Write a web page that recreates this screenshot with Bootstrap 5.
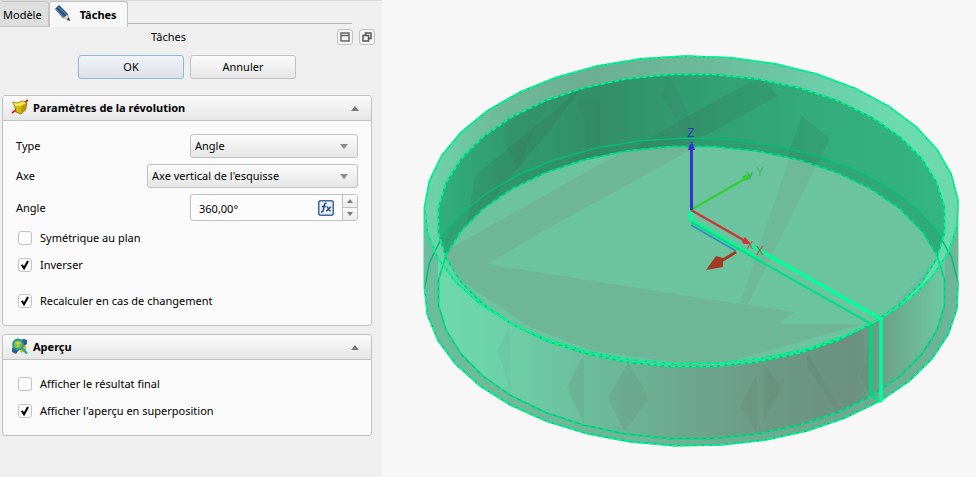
<!DOCTYPE html>
<html lang="fr">
<head>
<meta charset="utf-8">
<meta name="viewport" content="width=device-width, initial-scale=1">
<title>Tâches</title>
<link href="https://cdn.jsdelivr.net/npm/bootstrap@5.3.0/dist/css/bootstrap.min.css" rel="stylesheet">
<style>
body{font-family:"Noto Sans","Open Sans",sans-serif;font-size:11px;line-height:16px;color:#000;background:#f7f7f7}
.side{flex:0 0 382px;background:#efefef;border-top:1px solid #d9d9d9}
.tab-row{height:27px}
.tab-row .nav-link{color:#000;border:1px solid #c3c3c3;border-radius:3px 3px 0 0;line-height:16px}
.tab-model{background:#dedede;padding:5px 6px 3px 3px;border-left:0!important;height:26px}
.tab-tasks{background:#f7f7f7;padding:5px 10px 3px 4px;border-bottom:0!important;font-weight:700;height:26px}
.tab-tasks svg{margin-top:-2px}
.tab-line{border-bottom:1px solid #b5b5b5;height:23px;margin-right:30px}
.title-row{height:18px;padding-right:7px}
.mini{width:16px;height:16px;border:1px solid #c1c1c1;border-radius:3px;background:#f5f5f5}
.face{background:linear-gradient(#fbfbfb,#e6e6e6);border:1px solid #c1c1c1;border-radius:3px;color:#000}
.act{width:106px;height:24px}
.act.main{background:linear-gradient(#f0f3f8,#dde1e8);border-color:#8fb4de}
.panel{background:#fafafa;border:1px solid #c1c1c1;border-radius:3px}
.panel-head{background:linear-gradient(#fafafa,#e6e6e6);border:0;border-bottom:1px solid #c1c1c1;height:25px;font-weight:700;border-radius:2px 2px 0 0;width:100%;color:#000}
.pick{height:24px;padding:0 4px;appearance:none;background:url("data:image/svg+xml,%3Csvg xmlns='http://www.w3.org/2000/svg' width='8' height='5'%3E%3Cpath d='M0 0h8L4 5z' fill='%23888'/%3E%3C/svg%3E") right 9px center no-repeat,linear-gradient(#fbfbfb,#e6e6e6)}
.w-short{width:168px}
.w-long{width:211px}
.spin{height:27px;border:1px solid #c1c1c1;border-radius:3px;background:#fcfcfc}
.spin input{border:0;background:none;width:0;min-width:0;padding:2px 0 0 8px;outline:0}
.steps{flex:0 0 15px;border-left:1px solid #c1c1c1}
.steps button{background:linear-gradient(#fbfbfb,#ececec);border:0}
.steps button+button{border-top:1px solid #c1c1c1}
.tick{appearance:none;width:14px;height:14px;margin:0;border:1px solid #c3c3c3;border-radius:3px;background:#fcfcfc}
.tick:checked{background:url("data:image/svg+xml,%3Csvg xmlns='http://www.w3.org/2000/svg' width='12' height='12'%3E%3Cpath d='M2.8 5.8L5 9.3L9 2' fill='none' stroke='%23000' stroke-width='2.1'/%3E%3C/svg%3E") center no-repeat #fcfcfc}
.gap-tick{gap:8px}
.rows{padding:13px 13px 16px}
.rows-b{padding:16px 13px}
.checks{gap:11px}
.rows .checks,.rows-b{padding-left:2px}
.rows-b{padding-left:15px}
.grow-a{margin-top:9px}
.space-b{margin-top:9px}
.space-row{gap:6px}
.stack-side{gap:8px;padding:16px 10px 0 2px}
.view svg{display:block;width:100%;height:100vh}
svg text{font-family:"Liberation Sans",sans-serif}
</style>
<script src="https://cdn.jsdelivr.net/npm/bootstrap@5.3.0/dist/js/bootstrap.bundle.min.js"></script>
</head>
<body>
<div class="d-flex min-vh-100">
<aside class="side">
  <nav class="tab-row d-flex align-items-start">
    <a href="#" class="nav-link tab-model">Modèle</a>
    <a href="#" class="nav-link tab-tasks d-flex">
      <svg width="18" height="18" viewBox="0 0 18 18"><path d="M1 4L5 0L14 9L15 15L9 13Z" fill="#2a4a72"/><path d="M2 4L10 12M4 2L13 10" stroke="#4f7fb5" stroke-width="1.2"/><path d="M9 13L13.500 9.500L15.500 15.500Z" fill="#ddd2bd"/><path d="M13 14.500L15 12.500L16 16Z" fill="#111"/></svg>
      <span class="ps-2">Tâches</span></a>
    <div class="tab-line flex-fill"></div>
  </nav>
  <div class="title-row d-flex align-items-center">
    <div class="flex-fill text-center">Tâches</div>
    <div class="d-flex space-row">
      <button class="mini p-0 d-flex align-items-center justify-content-center" aria-label="Réduire"><svg width="10" height="10"><path d="M1 1H9V9H1ZM1 3.500H9" fill="none" stroke="#666" stroke-width="1.5"/></svg></button>
      <button class="mini p-0 d-flex align-items-center justify-content-center" aria-label="Détacher"><svg width="10" height="10"><path d="M3.500 3V1H9V6.500H7M1 3.500H6.500V9H1Z" fill="none" stroke="#555" stroke-width="1.5"/></svg></button>
    </div>
  </div>
  <div class="d-flex justify-content-center space-row space-b pe-2">
    <button class="face act main p-0">OK</button>
    <button class="face act p-0">Annuler</button>
  </div>
  <div class="stack-side d-flex flex-column">
    <section class="panel">
      <button class="panel-head d-flex align-items-center px-2">
        <svg width="18" height="18" viewBox="0 0 18 18"><path d="M1 14L5 11M13 4L17 1" stroke="#d32020" stroke-width="1.8"/><path d="M1.500 3L6 4L12 2L16 4L14.500 11L10 15L5 13L4 8Z" fill="#d8b60b" stroke="#715d08" stroke-width=".7"/><path d="M2 3.500L6 4.500L12 2.500L15 4L9.500 7L4.500 7Z" fill="#ffe94c"/><path d="M10 7.500L15.300 4.500L14 10.500L10 14Z" fill="#b99708"/></svg>
        <span class="flex-fill text-start ps-1">Paramètres de la révolution</span>
        <svg class="me-1" width="8" height="5"><path d="M0 5L4 0L8 5Z" fill="#777"/></svg>
      </button>
      <div class="rows">
        <div class="d-flex flex-column space-row">
          <div class="d-flex justify-content-between align-items-center"><label for="type">Type</label><select id="type" class="face pick w-short"><option>Angle</option></select></div>
          <div class="d-flex justify-content-between align-items-center"><label for="axis">Axe</label><select id="axis" class="face pick w-long"><option>Axe vertical de l'esquisse</option></select></div>
          <div class="d-flex justify-content-between align-items-center"><label for="angle">Angle</label>
            <div class="spin w-short d-flex"><input id="angle" class="flex-fill" value="360,00°">
              <button class="border-0 bg-transparent p-0 me-2" aria-label="Expression"><svg class="d-block" width="16" height="16"><rect x=".75" y=".75" width="14.500" height="14.500" rx="2" fill="#e6edf7" stroke="#40659f" stroke-width="1.5"/><path d="M8.500 3.500C6.500 2.500 6.200 5 5.800 7.500S5 12.500 3 12M3.800 6.500H7.800M8.500 7C10.500 6 10 11.500 12.800 10.800M12.800 6.800L8.300 11.200" fill="none" stroke="#24406f" stroke-width="1.3"/></svg></button>
              <div class="steps d-flex flex-column">
                <button class="flex-fill p-0 d-flex align-items-center justify-content-center" aria-label="Plus"><svg width="6" height="4"><path d="M0 4L3 0L6 4Z" fill="#777"/></svg></button>
                <button class="flex-fill p-0 d-flex align-items-center justify-content-center" aria-label="Moins"><svg width="6" height="4"><path d="M0 0H6L3 4Z" fill="#777"/></svg></button>
              </div>
            </div></div>
        </div>
        <div class="d-flex flex-column checks grow-a">
          <label class="d-flex align-items-center gap-tick"><input type="checkbox" class="tick">Symétrique au plan</label>
          <label class="d-flex align-items-center gap-tick"><input type="checkbox" class="tick" checked>Inverser</label>
          <label class="d-flex align-items-center gap-tick grow-a"><input type="checkbox" class="tick" checked>Recalculer en cas de changement</label>
        </div>
      </div>
    </section>
    <section class="panel">
      <button class="panel-head d-flex align-items-center px-2">
        <svg width="18" height="18" viewBox="0 0 18 18"><path d="M9 2L13 1L16 2V6L13 8ZM1 10L5 9L8 12L5 16L1 14Z" fill="#345b8c"/><path d="M8 10L15 7V13L10 15Z" fill="#e0b51d"/><circle cx="7" cy="6.500" r="5" fill="#86b83c" stroke="#159b9f" stroke-width="1.8"/><path d="M11 10L16 15.500" stroke="#16aaa8" stroke-width="2.300"/><path d="M4.500 5H9.500M7 3.500V9" stroke="#d8e56b"/></svg>
        <span class="flex-fill text-start ps-1">Aperçu</span>
        <svg class="me-1" width="8" height="5"><path d="M0 5L4 0L8 5Z" fill="#777"/></svg>
      </button>
      <div class="rows-b d-flex flex-column checks">
        <label class="d-flex align-items-center gap-tick"><input type="checkbox" class="tick">Afficher le résultat final</label>
        <label class="d-flex align-items-center gap-tick"><input type="checkbox" class="tick" checked>Afficher l'aperçu en superposition</label>
      </div>
    </section>
  </div>
</aside>
<main class="view flex-fill">
<svg viewBox="382 0 594 477" role="img" aria-label="Vue 3D de la révolution">
  <defs>
    <linearGradient id="gRim" gradientUnits="userSpaceOnUse" x1="424" x2="958" y1="0" y2="0"><stop offset="0" stop-color="#6dd5ac"/><stop offset=".15" stop-color="#6db99a"/><stop offset=".3" stop-color="#6dae94"/><stop offset=".52" stop-color="#6cb99b"/><stop offset=".75" stop-color="#6cceaa"/><stop offset=".9" stop-color="#6cdcb0"/><stop offset="1" stop-color="#6cd8ac"/></linearGradient>
    <linearGradient id="gIn" gradientUnits="userSpaceOnUse" x1="438" x2="945" y1="0" y2="0"><stop offset="0" stop-color="#31ae7d"/><stop offset=".15" stop-color="#31996f"/><stop offset=".32" stop-color="#328e69"/><stop offset=".52" stop-color="#329e74"/><stop offset=".75" stop-color="#33ac7c"/><stop offset="1" stop-color="#33b582"/></linearGradient>
    <linearGradient id="gOut" gradientUnits="userSpaceOnUse" x1="438" x2="945" y1="0" y2="0"><stop offset="0" stop-color="#6dd8ae"/><stop offset=".1" stop-color="#6dd3ab"/><stop offset=".25" stop-color="#6cc2a0"/><stop offset=".45" stop-color="#6cab92"/><stop offset=".65" stop-color="#6c9985"/><stop offset=".82" stop-color="#6c9080"/><stop offset=".86" stop-color="#6c9b86"/><stop offset="1" stop-color="#6cc9a4"/></linearGradient>
    <linearGradient id="gBase" gradientUnits="userSpaceOnUse" x1="424" x2="958" y1="0" y2="0"><stop offset="0" stop-color="#6cbd9d"/><stop offset=".4" stop-color="#6cb699"/><stop offset=".75" stop-color="#6ca88f"/><stop offset="1" stop-color="#6cb699"/></linearGradient>
    <clipPath id="clipTop"><polygon data-ring="in 220.5"/></clipPath>
    <clipPath id="clipFloor"><polygon data-ring="in 292.5"/></clipPath>
  </defs>
  <polygon data-ring="out 292" fill="url(#gBase)"/><path d="M424 207H958V289H424Z" fill="url(#gBase)"/>
  <polygon data-ring="in 292.5" fill="url(#gOut)"/><path d="M438 220H945V300H438Z" fill="url(#gOut)"/>
  <g fill="#5b6b5f" fill-opacity=".13"><path fill-opacity=".06" d="M510 325L498 350L511 395Z"/><path d="M584 355L567 387L584 424ZM628 363L608 398L625 432L649 397ZM757 374L740 406L757 433ZM764 364V420L781 387ZM807 352V367L837 412V404ZM870 345L860 377L870 396Z"/></g>
  <polygon data-ring="out 210" fill="url(#gRim)"/>
  <polygon data-ring="in 220.5" fill="url(#gIn)"/>
  <g clip-path="url(#clipTop)">
    <g fill="#3c493c" fill-opacity=".12"><path d="M580 89L475 176L465 235L518 168L550 130ZM760 77L778 96L710 133L600 190L640 144L690 115ZM802 116L830 139L815 166L785 163Z"/><path fill-opacity=".06" d="M505 125L503 140L518 168L550 95ZM668 74L661 95L690 140V118ZM576 100L585 120V160H600V100Z"/></g>
    <polygon data-ring="out 292" fill="#2e8864" fill-opacity=".22"/>
    <polygon data-ring="in 292.5" fill="#6cc3a0"/>
    <g clip-path="url(#clipFloor)" fill="#6eb697"><path d="M625 150L690 146L694 148L545 230L487 264L694 297L794 312L778 324H862L725 363L690 365L590 350L530 327L430 260Z"/><path d="M790 157L817 163L748 304L740 303Z" opacity=".75"/><path d="M938 259L882 318L938 285Z" opacity=".75"/></g>
  </g>
  <g fill="none" stroke-linejoin="round" stroke-width="1.5">
    <polygon data-ring="out 292" stroke="#04bd77"/>
    <polygon data-ring="in 292.5" stroke="#04c57c"/>
    <polygon data-ring="out 210" stroke="#00d584"/>
    <polygon data-ring="in 220.5" stroke="#00c97c"/>
    <g stroke="#00fb95" stroke-dasharray="4 3"><polygon data-ring="in 220.5"/><polygon data-ring="out 210" stroke-dasharray="7 2"/></g>
    <polygon data-ring="in 292.5" stroke="#00e58a" stroke-dasharray="4 4"/>
    <path data-arc="out 292" stroke="#00fb95" stroke-dasharray="6 2"/>
    <path d="M424 207V289M958 207V289" stroke="#5acb9c" stroke-width="1"/>
  </g>
  <path d="M691 225L736 251" stroke="#288fc0" stroke-width="1.500"/>
  <path d="M691 222L871 324V396L881 402" fill="none" stroke="#00df86" stroke-width="2.200"/>
  <path d="M871 324V396" stroke="#00d680" stroke-width="3.500"/>
  <path d="M691 210V221" stroke="#00ff9b" stroke-width="4"/>
  <path d="M691 219L760 259" stroke="#00fb95" stroke-width="2"/>
  <path d="M752 246L881 319V402" fill="none" stroke="#00ff9b" stroke-width="3.500"/>
  <path d="M691 210L748 177" stroke="#34cd34" stroke-width="2.200"/><path d="M742 177L746 174L751 176L748 180L743 181Z" fill="#34cd34"/>
  <path d="M691 210L747 242" stroke="#cd3434" stroke-width="2.200"/><path d="M742 242L745 237L751 244L744 244Z" fill="#cd3434"/>
  <path d="M691.500 210V148" stroke="#3434cd" stroke-width="3"/><path d="M688 150L690 144H693L695 150Z" fill="#3434cd"/>
  <path d="M736 252L718 263" stroke="#a53a22" stroke-width="3"/><path d="M706 270L716 256L723 258V267Z" fill="#a53a22"/>
  <g font-size="12" text-anchor="middle"><text x="691" y="137" fill="#3434cd">Z</text><text x="691" y="147" font-size="8" fill="#3434cd">Z</text><text x="760" y="176" fill="#3fb95c">Y</text><text x="750" y="180" font-size="10" fill="#2fae4c">Y</text><text x="760" y="255" fill="#b5523f">X</text><text x="750" y="249" font-size="11" fill="#b5523f">X</text></g>
</svg>
</main>
</div>
<script>
// Circles in isometric view, split into chords from the seam at 45 degrees.
const rings = { out: [267, 154, 37], in: [254, 146.5, 36] };
function ringPoints(spec) {
  const [kind, cy] = spec.split(' ');
  const [rx, ry, n] = rings[kind];
  return Array.from({ length: n }, (_, i) => {
    const a = Math.PI / 4 + i * 2 * Math.PI / n;
    return [(691.5 + rx * Math.cos(a)).toFixed(1), (+cy + ry * Math.sin(a)).toFixed(1)];
  });
}
document.querySelectorAll('[data-ring]').forEach(el => el.setAttribute('points', ringPoints(el.dataset.ring).join(' ')));
document.querySelectorAll('[data-arc]').forEach(el => {
  const p = ringPoints(el.dataset.arc);
  el.setAttribute('d', 'M' + [...p.slice(-5), ...p.slice(0, 15)].join('L'));
});
</script>
</body>
</html>
